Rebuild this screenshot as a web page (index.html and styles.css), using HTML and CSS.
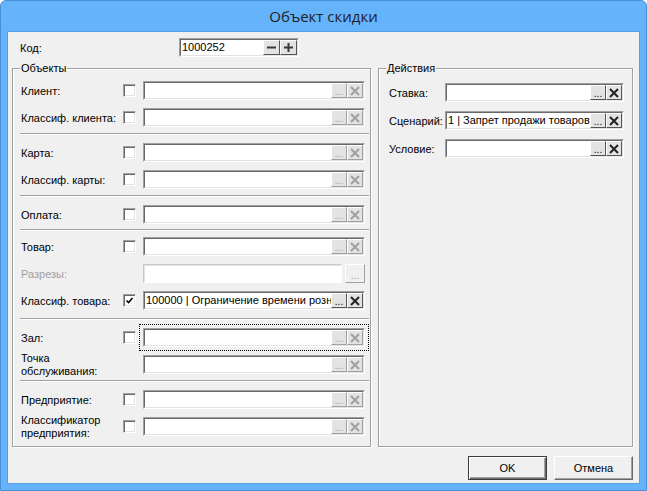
FILE: index.html
```html
<!DOCTYPE html>
<html lang="ru">
<head>
  <meta charset="UTF-8" />
  <title>Объект скидки</title>
  <link rel="stylesheet" href="styles.css">
</head>
<body>

  <div class="window">
    <!-- Title bar -->
    <div class="titlebar">Объект скидки</div>

    <div class="client">

      <!-- Code -->
      <div class="code-row">
        <span class="code-label">Код:</span>
        <div class="spin">
          <div class="spin-inner">
            <span class="spin-text">1000252</span>
            <span class="spin-btn">
              <svg width="9" height="9" viewBox="0 0 9 9"><rect x="0" y="3.5" width="9" height="2" fill="#3a3a3a"/></svg>
            </span>
            <span class="spin-btn">
              <svg width="9" height="9" viewBox="0 0 9 9"><rect x="0" y="3.5" width="9" height="2" fill="#3a3a3a"/><rect x="3.5" y="0" width="2" height="9" fill="#3a3a3a"/></svg>
            </span>
          </div>
        </div>
      </div>

      <div class="groups">

        <!-- Objects -->
        <div class="group objects">
          <span class="group-title">Объекты</span>

          <div class="section">
            <div class="row">
              <span class="label">Клиент:</span>
              <span class="check"></span>
              <div class="lookup"><div class="lookup-inner">
                <span class="lookup-text"></span>
                <span class="lk-btn dots">...</span>
                <span class="lk-btn clear"><svg width="10" height="10" viewBox="0 0 10 10"><path d="M1 1L9 9M9 1L1 9"/></svg></span>
              </div></div>
            </div>
            <div class="row">
              <span class="label">Классиф. клиента:</span>
              <span class="check"></span>
              <div class="lookup"><div class="lookup-inner">
                <span class="lookup-text"></span>
                <span class="lk-btn dots">...</span>
                <span class="lk-btn clear"><svg width="10" height="10" viewBox="0 0 10 10"><path d="M1 1L9 9M9 1L1 9"/></svg></span>
              </div></div>
            </div>
          </div>

          <div class="sep"></div>

          <div class="section">
            <div class="row">
              <span class="label">Карта:</span>
              <span class="check"></span>
              <div class="lookup"><div class="lookup-inner">
                <span class="lookup-text"></span>
                <span class="lk-btn dots">...</span>
                <span class="lk-btn clear"><svg width="10" height="10" viewBox="0 0 10 10"><path d="M1 1L9 9M9 1L1 9"/></svg></span>
              </div></div>
            </div>
            <div class="row">
              <span class="label">Классиф. карты:</span>
              <span class="check"></span>
              <div class="lookup"><div class="lookup-inner">
                <span class="lookup-text"></span>
                <span class="lk-btn dots">...</span>
                <span class="lk-btn clear"><svg width="10" height="10" viewBox="0 0 10 10"><path d="M1 1L9 9M9 1L1 9"/></svg></span>
              </div></div>
            </div>
          </div>

          <div class="sep"></div>

          <div class="section">
            <div class="row">
              <span class="label">Оплата:</span>
              <span class="check"></span>
              <div class="lookup"><div class="lookup-inner">
                <span class="lookup-text"></span>
                <span class="lk-btn dots">...</span>
                <span class="lk-btn clear"><svg width="10" height="10" viewBox="0 0 10 10"><path d="M1 1L9 9M9 1L1 9"/></svg></span>
              </div></div>
            </div>
          </div>

          <div class="sep tight"></div>

          <div class="section">
            <div class="row">
              <span class="label">Товар:</span>
              <span class="check"></span>
              <div class="lookup"><div class="lookup-inner">
                <span class="lookup-text"></span>
                <span class="lk-btn dots">...</span>
                <span class="lk-btn clear"><svg width="10" height="10" viewBox="0 0 10 10"><path d="M1 1L9 9M9 1L1 9"/></svg></span>
              </div></div>
            </div>
            <div class="row">
              <span class="label disabled">Разрезы:</span>
              <span class="check none"></span>
              <div class="plain-edit"></div>
              <span class="side-btn">...</span>
            </div>
            <div class="row">
              <span class="label">Классиф. товара:</span>
              <span class="check checked"><svg width="9" height="9" viewBox="0 0 9 9"><path d="M1.5 4.5L3.5 6.5L7.5 2"/></svg></span>
              <div class="lookup active"><div class="lookup-inner">
                <span class="lookup-text">100000 | Ограничение времени розни</span>
                <span class="lk-btn dots">...</span>
                <span class="lk-btn clear"><svg width="10" height="10" viewBox="0 0 10 10"><path d="M1 1L9 9M9 1L1 9"/></svg></span>
              </div></div>
            </div>
          </div>

          <div class="sep wide"></div>

          <div class="section">
            <div class="row">
              <span class="label">Зал:</span>
              <span class="check"></span>
              <div class="lookup focused"><div class="lookup-inner">
                <span class="lookup-text"></span>
                <span class="lk-btn dots">...</span>
                <span class="lk-btn clear"><svg width="10" height="10" viewBox="0 0 10 10"><path d="M1 1L9 9M9 1L1 9"/></svg></span>
              </div></div>
            </div>
            <div class="row">
              <span class="label two-line">Точка<br>обслуживания:</span>
              <span class="check none"></span>
              <div class="lookup"><div class="lookup-inner">
                <span class="lookup-text"></span>
                <span class="lk-btn dots">...</span>
                <span class="lk-btn clear"><svg width="10" height="10" viewBox="0 0 10 10"><path d="M1 1L9 9M9 1L1 9"/></svg></span>
              </div></div>
            </div>
          </div>

          <div class="sep"></div>

          <div class="section">
            <div class="row">
              <span class="label">Предприятие:</span>
              <span class="check"></span>
              <div class="lookup"><div class="lookup-inner">
                <span class="lookup-text"></span>
                <span class="lk-btn dots">...</span>
                <span class="lk-btn clear"><svg width="10" height="10" viewBox="0 0 10 10"><path d="M1 1L9 9M9 1L1 9"/></svg></span>
              </div></div>
            </div>
            <div class="row">
              <span class="label two-line">Классификатор<br>предприятия:</span>
              <span class="check"></span>
              <div class="lookup"><div class="lookup-inner">
                <span class="lookup-text"></span>
                <span class="lk-btn dots">...</span>
                <span class="lk-btn clear"><svg width="10" height="10" viewBox="0 0 10 10"><path d="M1 1L9 9M9 1L1 9"/></svg></span>
              </div></div>
            </div>
          </div>
        </div>

        <!-- Actions -->
        <div class="group actions">
          <span class="group-title">Действия</span>

          <div class="section">
            <div class="row">
              <span class="label">Ставка:</span>
              <div class="lookup active"><div class="lookup-inner">
                <span class="lookup-text"></span>
                <span class="lk-btn dots">...</span>
                <span class="lk-btn clear"><svg width="10" height="10" viewBox="0 0 10 10"><path d="M1 1L9 9M9 1L1 9"/></svg></span>
              </div></div>
            </div>
            <div class="row">
              <span class="label">Сценарий:</span>
              <div class="lookup active"><div class="lookup-inner">
                <span class="lookup-text">1 | Запрет продажи товаров</span>
                <span class="lk-btn dots">...</span>
                <span class="lk-btn clear"><svg width="10" height="10" viewBox="0 0 10 10"><path d="M1 1L9 9M9 1L1 9"/></svg></span>
              </div></div>
            </div>
            <div class="row">
              <span class="label">Условие:</span>
              <div class="lookup active"><div class="lookup-inner">
                <span class="lookup-text"></span>
                <span class="lk-btn dots">...</span>
                <span class="lk-btn clear"><svg width="10" height="10" viewBox="0 0 10 10"><path d="M1 1L9 9M9 1L1 9"/></svg></span>
              </div></div>
            </div>
          </div>
        </div>

      </div>

      <!-- Dialog buttons -->
      <div class="buttons">
        <button class="btn default">OK</button>
        <button class="btn">Отмена</button>
      </div>

    </div>
  </div>

</body>
</html>
```

FILE: styles.css
```css
body {
  margin: 0;
  font-family: "Liberation Sans", Arial, sans-serif;
  font-size: 11px;
  color: #000;
  background: #fff;
}

/* Window frame */
.window {
  width: 647px;
  height: 491px;
  box-sizing: border-box;
  background: #65b4fb;
  border: 1px solid #4a8fd6;
  border-radius: 6px 6px 0 0;
  padding: 0 6px 6px 6px;
  display: flex;
  flex-direction: column;
}

.titlebar {
  flex: none;
  height: 30px;
  line-height: 30px;
  text-align: center;
  font-family: "Open Sans", "Noto Sans", sans-serif;
  font-size: 15px;
  color: #1e1e1e;
}

.client {
  flex: 1;
  background: #f0f0f0;
  border: 1px solid #5a9fe4;
  padding: 0 6px 0 4px;
  display: flex;
  flex-direction: column;
}

/* Code row */
.code-row {
  display: flex;
  align-items: center;
  height: 19px;
  margin-top: 6px;
  padding-left: 8px;
}
.code-label {
  width: 159px;
}
.spin {
  width: 120px;
  height: 19px;
  box-sizing: border-box;
  border: 1px solid;
  border-color: #a0a0a0 #fff #fff #a0a0a0;
}
.spin-inner {
  height: 100%;
  box-sizing: border-box;
  border: 1px solid;
  border-color: #696969 #e3e3e3 #e3e3e3 #696969;
  background: #fff;
  display: flex;
}
.spin-text {
  flex: 1;
  line-height: 15px;
  padding-left: 1px;
}
.spin-btn {
  width: 17px;
  height: 15px;
  box-sizing: border-box;
  background: #e3e3e3;
  border: 1px solid;
  border-color: #fff #555 #555 #fff;
  display: flex;
  align-items: center;
  justify-content: center;
}

/* Groups */
.groups {
  display: flex;
  gap: 7px;
  margin-top: 11px;
  height: 379px;
}
.group {
  position: relative;
  box-sizing: border-box;
  border: 1px solid #a0a0a0;
  box-shadow: inset 1px 1px 0 #fff, 1px 1px 0 #fff;
}
.group-title {
  position: absolute;
  top: -8px;
  left: 7px;
  padding: 0 1px;
  line-height: 14px;
  background: #f0f0f0;
}
.objects {
  width: 359px;
  padding: 12px 5px 0 8px;
}
.actions {
  width: 255px;
  padding: 14px 8px 0 10px;
}

.section {
  display: flex;
  flex-direction: column;
  gap: 8px;
}
.actions .section {
  gap: 9px;
}

.sep {
  height: 0;
  border-top: 1px solid #a0a0a0;
  border-bottom: 1px solid #fff;
  margin: 6px -4px 8px -1px;
}
.sep.tight {
  margin: 5px -4px 6px -1px;
}
.sep.wide {
  margin: 8px -4px 8px -1px;
}

.row {
  display: flex;
  align-items: center;
  height: 19px;
}
.label {
  flex: none;
  width: 102px;
  white-space: nowrap;
}
.actions .label {
  width: 56px;
}
.label.two-line {
  line-height: 13px;
}
.label.disabled {
  color: #a0a0a0;
}

/* Checkbox */
.check {
  flex: none;
  width: 13px;
  height: 13px;
  margin-right: 7px;
  box-sizing: border-box;
  border: 1px solid;
  border-color: #a0a0a0 #fff #fff #a0a0a0;
  box-shadow: inset 1px 1px 0 #696969, inset -1px -1px 0 #e3e3e3;
  background: #fff;
  display: flex;
  align-items: center;
  justify-content: center;
}
.check.none {
  border: none;
  box-shadow: none;
  background: none;
}
.check svg path {
  fill: none;
  stroke: #000;
  stroke-width: 1.6;
}

/* Lookup edit */
.lookup {
  flex: 1;
  min-width: 0;
  height: 19px;
  box-sizing: border-box;
  border: 1px solid;
  border-color: #a0a0a0 #fff #fff #a0a0a0;
}
.lookup.focused {
  outline: 1px dotted #000;
  outline-offset: 3px;
}
.lookup-inner {
  height: 100%;
  box-sizing: border-box;
  border: 1px solid;
  border-color: #696969 #e3e3e3 #e3e3e3 #696969;
  background: #fff;
  display: flex;
}
.lookup-text {
  flex: 1;
  min-width: 0;
  overflow: hidden;
  white-space: nowrap;
  line-height: 15px;
  padding-left: 1px;
}
.lk-btn {
  flex: none;
  width: 16px;
  height: 15px;
  box-sizing: border-box;
  background: #e3e3e3;
  border: 1px solid;
  border-color: #fff #a0a0a0 #a0a0a0 #fff;
  display: flex;
  align-items: center;
  justify-content: center;
}
.lk-btn.dots {
  align-items: flex-end;
  font-size: 10px;
  line-height: 10px;
  color: #a0a0a0;
}
.lk-btn.clear svg path {
  fill: none;
  stroke: #a0a0a0;
  stroke-width: 2;
}
.active .lk-btn {
  border-color: #fff #555 #555 #fff;
}
.active .lk-btn.dots {
  color: #000;
}
.active .lk-btn.clear svg path {
  stroke: #222;
}

/* Disabled edit with separate button */
.plain-edit {
  flex: 1;
  height: 19px;
  box-sizing: border-box;
  background: #fff;
  border: 1px solid;
  border-color: #c8c8c8 #fff #fff #c8c8c8;
  box-shadow: inset 1px 1px 0 #e3e3e3;
}
.side-btn {
  flex: none;
  width: 20px;
  height: 19px;
  margin-left: 3px;
  box-sizing: border-box;
  background: #f0f0f0;
  border: 1px solid;
  border-color: #fff #a0a0a0 #a0a0a0 #fff;
  display: flex;
  align-items: flex-end;
  justify-content: center;
  font-size: 10px;
  line-height: 12px;
  color: #a0a0a0;
}

/* Dialog buttons */
.buttons {
  display: flex;
  justify-content: flex-end;
  gap: 7px;
  margin-top: 9px;
}
.btn {
  width: 79px;
  height: 24px;
  box-sizing: border-box;
  font-family: "Liberation Sans", Arial, sans-serif;
  font-size: 11px;
  color: #000;
  background: #f0f0f0;
  border: 1px solid;
  border-color: #fff #696969 #696969 #fff;
  box-shadow: inset -1px -1px 0 #a0a0a0;
  padding: 0;
}
.btn.default {
  border: 1px solid #3c3c3c;
  box-shadow: inset 1px 1px 0 #fff, inset -1px -1px 0 #696969, inset -2px -2px 0 #a0a0a0;
}
```
